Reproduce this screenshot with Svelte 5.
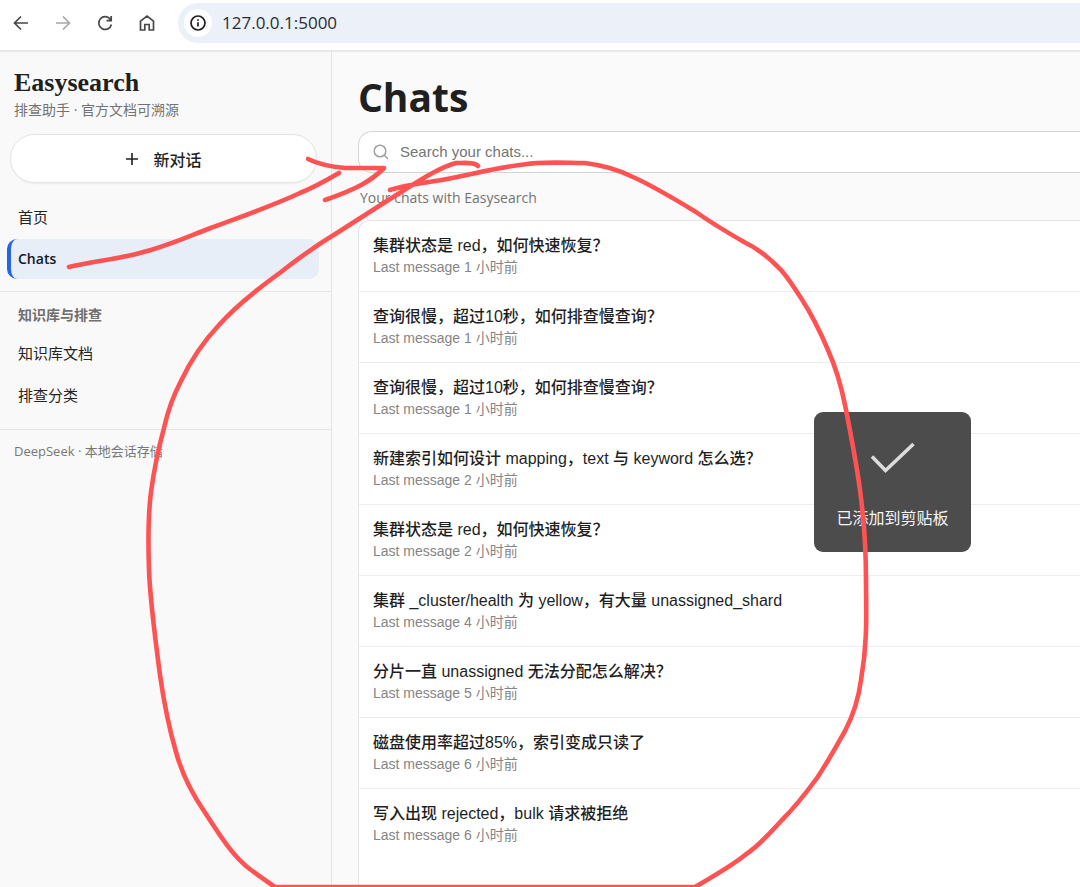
<script>
  const chats = [
    { title: '集群状态是 red，如何快速恢复？', hours: 1 },
    { title: '查询很慢，超过10秒，如何排查慢查询？', hours: 1 },
    { title: '查询很慢，超过10秒，如何排查慢查询？', hours: 1 },
    { title: '新建索引如何设计 mapping，text 与 keyword 怎么选？', hours: 2 },
    { title: '集群状态是 red，如何快速恢复？', hours: 2 },
    { title: '集群 _cluster/health 为 yellow，有大量 unassigned_shard', hours: 4 },
    { title: '分片一直 unassigned 无法分配怎么解决？', hours: 5 },
    { title: '磁盘使用率超过85%，索引变成只读了', hours: 6 },
    { title: '写入出现 rejected，bulk 请求被拒绝', hours: 6 }
  ];

  // Freehand pen strokes drawn over the page
  const strokes = [
    'M69 267 C95 261 118 259 140 253 C165 247 185 238 208 229 C240 217 270 207 300 193 C315 187 327 180 339 173',
    'M308 159 C320 165 334 167 345 168 L384 168 C371 181 357 189 325 200',
    'M478 166 C475 162 466 163 456 163 C440 167 420 180 390 199 L340 231 C320 243 300 257 281 272 C252 293 235 307 219 325 C202 343 190 362 181 381 C172 398 168 410 164 428 C158 450 154 470 151 492 C148 515 148 540 149 570 C150 600 156 645 160 675 C165 710 169 728 176 752 C182 774 191 792 204 811 C217 831 232 856 251 870 C259 876 266 881 275 887 L695 887 C714 876 733 865 745 855 C760 845 771 832 782 820 C794 808 806 793 817 778 C829 760 836 747 845 731 C855 712 859 695 861 680 C868 640 866 610 866 580 C866 550 864 520 860 490 C856 460 850 430 845 405 C841 385 836 368 828 350 C820 331 812 315 801 298 C793 286 786 274 778 267 C767 256 757 248 744 242 C725 231 710 222 696 212 C673 198 655 187 633 177 C617 169 601 165 585 163 C570 163 555 162 537 163 C500 166 475 174 447 179 C425 183 405 185 390 190'
  ];
</script>

<div class="window">
  <header class="toolbar">
    <button aria-label="Back"><svg viewBox="0 0 18 18"><path d="M16 9H3M9 2.500 2.500 9 9 15.500" /></svg></button>
    <button aria-label="Forward" class="off"><svg viewBox="0 0 18 18"><path d="M2 9h13M9 2.500 15.500 9 9 15.500" /></svg></button>
    <button aria-label="Reload"><svg viewBox="0 0 18 18"><path d="M14.500 5.500A6.400 6.400 0 1 0 15.400 10.500M15.200 2v4.700h-4.700" /></svg></button>
    <button aria-label="Home"><svg viewBox="0 0 18 18"><path d="M2.500 7.200 9 2l6.500 5.200V16h-4.300v-5.500H6.800V16H2.500Z" /></svg></button>
    <div class="omnibox">
      <button class="info" aria-label="Site information"><svg viewBox="0 0 18 18"><circle cx="9" cy="9" r="7" /><path d="M9 8.200v4.300M9 5.200v1.600" /></svg></button>
      <input class="url" aria-label="Address" value="127.0.0.1:5000" />
    </div>
  </header>

  <div class="page">
    <aside>
      <div class="brand">Easysearch</div>
      <div class="tagline">排查助手 · 官方文档可溯源</div>
      <button class="new"><svg viewBox="0 0 14 14"><path d="M7 1v12M1 7h12" /></svg>新对话</button>
      <nav>
        <a href="#home">首页</a>
        <a href="#chats" class="active">Chats</a>
      </nav>
      <nav class="group">
        <h2>知识库与排查</h2>
        <a href="#docs">知识库文档</a>
        <a href="#categories">排查分类</a>
      </nav>
      <footer>DeepSeek · 本地会话存储</footer>
    </aside>

    <main>
      <h1>Chats</h1>
      <label class="search">
        <svg viewBox="0 0 16 16"><circle cx="7" cy="7" r="5.800" /><path d="m11.300 11.300 3.700 3.700" /></svg>
        <input type="text" placeholder="Search your chats..." aria-label="Search your chats" />
      </label>
      <p class="caption">Your chats with Easysearch</p>
      <ul>
        {#each chats as chat}
          <li>
            <div class="title">{chat.title}</div>
            <div class="time">Last message {chat.hours} 小时前</div>
          </li>
        {/each}
      </ul>
    </main>
  </div>

  <div class="toast" role="status">
    <svg viewBox="0 0 46 32"><path d="M2 14.500 15.500 28.500 43.500 2" /></svg>
    <span>已添加到剪贴板</span>
  </div>

  <svg class="ink" viewBox="0 0 1080 887" aria-hidden="true">
    {#each strokes as d}<path {d} />{/each}
  </svg>
</div>

<style>
  :global(body) { margin: 0; }
  * { box-sizing: border-box; }
  .window {
    position: relative;
    display: flex;
    flex-direction: column;
    min-height: 100vh;
    overflow: hidden;
    color: #1f1f1f;
    background: #fafafa;
    font-family: "Open Sans", "Noto Sans CJK SC", sans-serif;
  }
  svg { fill: none; stroke: currentColor; display: block; }
  button { border: 0; padding: 0; background: none; font: inherit; color: inherit; }
  input { border: 0; outline: 0; padding: 0; background: none; font: inherit; color: inherit; min-width: 0; flex: 1; }

  .toolbar {
    display: flex;
    align-items: center;
    gap: 24px;
    height: 52px;
    padding: 0 0 4px 12px;
    background: #fff;
    border-bottom: 2px solid #e8e8e8;
    color: #474747;
  }
  .toolbar svg { width: 18px; height: 18px; stroke-width: 1.7; }
  .toolbar .off { color: #a8a8a8; }
  .omnibox {
    flex: 1;
    display: flex;
    align-items: center;
    gap: 10px;
    height: 40px;
    margin-left: -2px;
    padding-left: 6px;
    border-radius: 20px 0 0 20px;
    background: #ebf0f9;
  }
  .info {
    display: grid;
    place-items: center;
    width: 28px;
    height: 28px;
    border-radius: 50%;
    background: #fff;
    color: #1f1f1f;
  }
  .url { font-size: 17px; line-height: 24px; color: #2c2c2f; }

  .page { flex: 1; display: flex; }
  aside {
    flex: none;
    width: 332px;
    background: #f9f9f9;
    border-right: 1px solid #e4e4e4;
  }
  .brand {
    padding: 15px 14px 0;
    font: bold 26px/32px "Liberation Serif", serif;
  }
  .tagline { padding: 0 14px; font-size: 14px; line-height: 22px; color: #737373; }
  .new {
    display: flex;
    align-items: center;
    justify-content: center;
    gap: 14px;
    width: calc(100% - 24px);
    height: 49px;
    margin: 13px 14px 14px 10px;
    border: 1px solid #e4e4e4;
    border-radius: 25px;
    background: #fff;
    box-shadow: 0 1px 2px #0000000c;
    font-size: 16px;
    font-weight: 500;
  }
  .new svg { width: 14px; height: 14px; stroke-width: 1.6; }
  nav { display: flex; flex-direction: column; gap: 2px; padding: 0 12px 12px 7px; }
  nav a {
    padding: 0 7px;
    border-left: 4px solid transparent;
    border-radius: 10px;
    font-size: 15px;
    line-height: 40px;
    color: #242424;
    text-decoration: none;
  }
  nav .active {
    border-left-color: #2563eb;
    background: #e7eef7;
    color: #101827;
    font-size: 14px;
    font-weight: 600;
  }
  .group { border-top: 1px solid #e5e5e5; border-bottom: 1px solid #e5e5e5; padding-top: 12px; padding-bottom: 14px; }
  h2 { margin: 0; padding: 0 11px 5px; font-size: 14px; line-height: 22px; font-weight: 700; color: #707070; }
  footer { padding: 11px 14px; font-size: 13px; line-height: 20px; color: #777; }

  main { flex: 1; min-width: 0; display: flex; flex-direction: column; padding-left: 26px; }
  h1 { margin: 18px 0 7px; font-size: 39px; line-height: 54px; font-weight: 700; color: #202020; }
  .search {
    display: flex;
    align-items: center;
    gap: 11px;
    height: 42px;
    padding-left: 14px;
    border: 1px solid #d5d5d5;
    border-right: 0;
    border-radius: 14px 0 0 14px;
    background: #fff;
    font: 15px/20px "Liberation Sans", sans-serif;
  }
  .search svg { width: 16px; height: 16px; stroke-width: 1.5; color: #a0a0a0; }
  input::placeholder { color: #757575; opacity: 1; }
  .caption { margin: 15px 2px 12px; font-size: 14px; line-height: 20px; color: #747474; }
  ul {
    flex: 1;
    margin: 0;
    padding: 0;
    list-style: none;
    border: 1px solid #e5e5e5;
    border-width: 1px 0 0 1px;
    border-radius: 12px 0 0 0;
    background: #fff;
    font-family: "Liberation Sans", "Noto Sans CJK SC", sans-serif;
  }
  li { padding: 14px; border-bottom: 1px solid #ededed; }
  li:last-child { border-bottom: 0; }
  .title { font-size: 16px; line-height: 22px; font-weight: 500; }
  .time { font-size: 14px; line-height: 20px; color: #858585; }

  .toast {
    position: absolute;
    left: 814px;
    top: 412px;
    display: flex;
    flex-direction: column;
    align-items: center;
    gap: 32px;
    width: 157px;
    height: 140px;
    padding-top: 30px;
    border-radius: 9px;
    background: #4c4c4c;
    color: #f5f5f5;
    font-size: 16px;
    line-height: 24px;
  }
  .toast svg { width: 46px; height: 32px; stroke-width: 3.5; stroke: #dcdcdc; }
  .ink {
    position: absolute;
    left: 0;
    top: 0;
    width: 1080px;
    height: 887px;
    pointer-events: none;
    stroke: #ff5252;
    stroke-width: 4.6;
    stroke-linecap: round;
    stroke-linejoin: round;
  }
</style>
